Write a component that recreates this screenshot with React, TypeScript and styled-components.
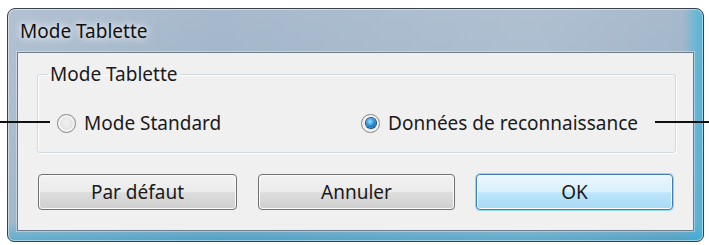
import React from 'react'
import styled, { createGlobalStyle } from 'styled-components'

const GlobalStyle = createGlobalStyle`
  html, body {
    margin: 0;
    padding: 0;
    background: #ffffff;
  }
  body {
    font-family: 'Noto Sans', 'Open Sans', sans-serif;
  }
`

const Page = styled.div`
  position: relative;
  width: 709px;
  height: 245px;
  padding: 8px 0 0 7px;
  box-sizing: border-box;
`

const Window = styled.div`
  width: 697px;
  height: 234px;
  box-sizing: border-box;
  border: 1px solid #3b4148;
  border-radius: 8px 8px 7px 7px;
  background:
    linear-gradient(90deg, rgba(255, 255, 255, 0.12) 0%, rgba(255, 255, 255, 0) 30%, rgba(255, 255, 255, 0.1) 75%, rgba(255, 255, 255, 0) 97%, rgba(60, 180, 220, 0.8) 100%),
    linear-gradient(180deg, #a7b9cc 0%, #9eb2c7 60%, #93b0c5 92%, #4aa2c8 100%);
  box-shadow: inset 0 0 0 1px rgba(255, 255, 255, 0.45);
  padding: 0 9px 10px 9px;
  display: flex;
  flex-direction: column;
`

const TitleBar = styled.div`
  flex-shrink: 0;
  height: 43px;
  display: flex;
  align-items: center;
  padding-left: 3px;
  box-sizing: border-box;
`

const Title = styled.span`
  font-size: 19px;
  color: #111;
  text-shadow: 0 0 6px rgba(255, 255, 255, 0.95), 0 0 12px rgba(255, 255, 255, 0.7);
`

const Client = styled.div`
  flex: 1;
  min-height: 0;
  background: #f0f0f0;
  border: 1px solid #6f7d8a;
  box-shadow: 0 0 0 1px rgba(255, 255, 255, 0.35);
  padding: 8px 17px 0 19px;
  display: flex;
  flex-direction: column;
`

const GroupBox = styled.fieldset`
  margin: 0;
  height: 92px;
  box-sizing: border-box;
  border: 1px solid #cfd9df;
  box-shadow: inset 1px 1px 0 #ffffff, 1px 1px 0 #ffffff;
  border-radius: 3px;
  padding: 0 37px 0 19px;
  min-width: 0;
`

const Legend = styled.legend`
  font-size: 19px;
  line-height: 26px;
  color: #1a1a1a;
  padding: 0 2px;
  margin-left: -9px;
`

const RadioRow = styled.div`
  display: flex;
  align-items: center;
  justify-content: space-between;
  height: 26px;
  margin-top: 23px;
`

const RadioItem = styled.label`
  display: flex;
  align-items: center;
  gap: 8px;
  font-size: 19px;
  line-height: 26px;
  color: #1a1a1a;
`

const RadioCircle = styled.span<{ $checked?: boolean }>`
  width: 19px;
  height: 19px;
  box-sizing: border-box;
  border-radius: 50%;
  border: 1px solid #8c8e90;
  background: radial-gradient(circle at 50% 45%, #f2f2f2 0%, #e2e2e2 55%, #c4c4c4 100%);
  box-shadow: inset 0 0 0 2px #f4f4f4, 0 0 1px rgba(0, 0, 0, 0.2);
  display: flex;
  align-items: center;
  justify-content: center;

  &::after {
    content: '';
    display: ${(p) => (p.$checked ? 'block' : 'none')};
    width: 10px;
    height: 10px;
    border-radius: 50%;
    background: radial-gradient(circle at 40% 35%, #9fe0ff 0%, #2e93dc 45%, #0d4a86 100%);
    box-shadow: 0 0 0 1px #1a4a78;
  }
`

const ButtonRow = styled.div`
  display: grid;
  grid-template-columns: 199px 197px 197px;
  column-gap: 21px;
  margin-top: 21px;
  padding-left: 1px;
`

const Button = styled.button<{ $default?: boolean }>`
  height: 36px;
  font-family: 'Noto Sans', 'Open Sans', sans-serif;
  font-size: 19px;
  color: #1a1a1a;
  border-radius: 4px;
  border: 1px solid ${(p) => (p.$default ? '#3c7fb1' : '#707070')};
  background: ${(p) =>
    p.$default
      ? 'linear-gradient(180deg, #eaf6fd 0%, #d9f0fc 50%, #bee6fd 52%, #a7d9f5 100%)'
      : 'linear-gradient(180deg, #f2f2f2 0%, #ebebeb 50%, #dddddd 52%, #cfcfcf 100%)'};
  box-shadow: ${(p) =>
    p.$default
      ? 'inset 0 0 0 1px #ffffff, 0 0 0 1px rgba(64, 200, 240, 0.55)'
      : 'inset 0 0 0 1px #fcfcfc'};
  padding: 0;
  cursor: pointer;
`

const Callout = styled.div<{ $side: 'left' | 'right' }>`
  position: absolute;
  top: 121px;
  height: 2px;
  background: #111;
  ${(p) => (p.$side === 'left' ? 'left: 0; width: 50px;' : 'right: 0; width: 54px;')}
`

const App = (): JSX.Element => {
  return (
    <React.Fragment>
      <GlobalStyle />
      <Page>
        <Window>
          <TitleBar>
            <Title>Mode Tablette</Title>
          </TitleBar>
          <Client>
            <GroupBox>
              <Legend>Mode Tablette</Legend>
              <RadioRow>
                <RadioItem>
                  <RadioCircle />
                  Mode Standard
                </RadioItem>
                <RadioItem>
                  <RadioCircle $checked />
                  Données de reconnaissance
                </RadioItem>
              </RadioRow>
            </GroupBox>
            <ButtonRow>
              <Button>Par défaut</Button>
              <Button>Annuler</Button>
              <Button $default>OK</Button>
            </ButtonRow>
          </Client>
        </Window>
        <Callout $side="left" />
        <Callout $side="right" />
      </Page>
    </React.Fragment>
  )
}

export default App
